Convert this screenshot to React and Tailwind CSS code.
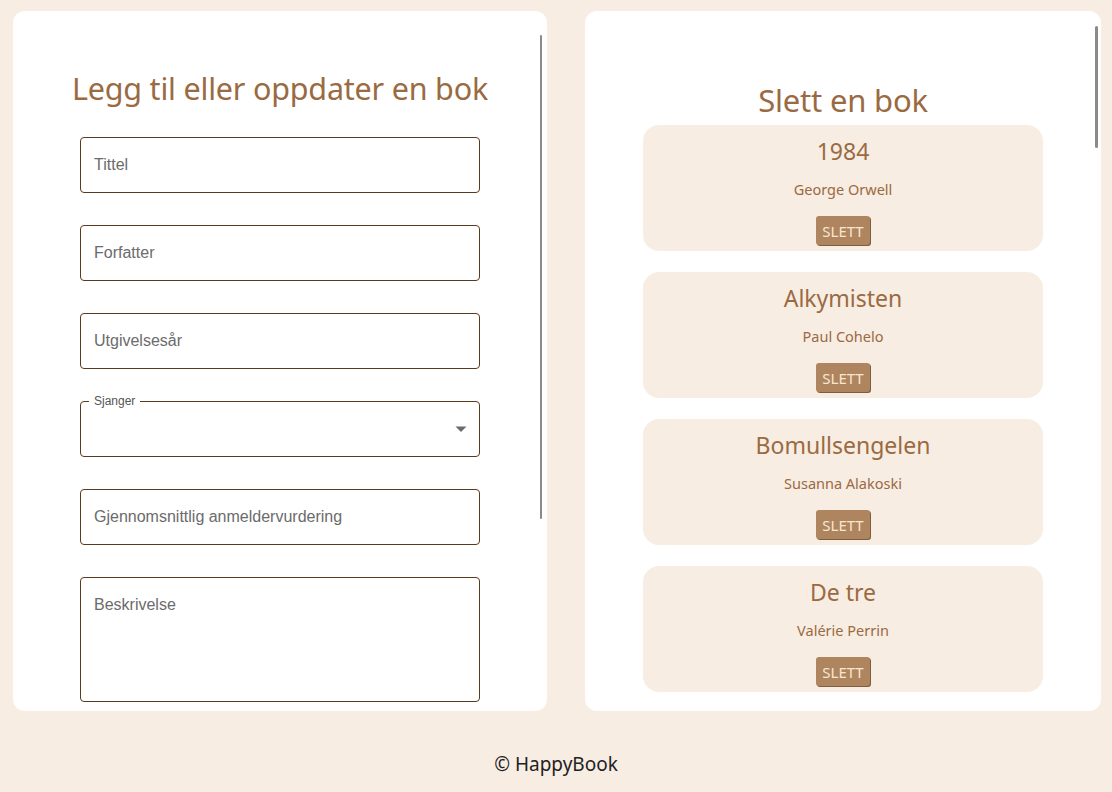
import React from "react";

const books = [
  { title: "1984", author: "George Orwell" },
  { title: "Alkymisten", author: "Paul Cohelo" },
  { title: "Bomullsengelen", author: "Susanna Alakoski" },
  { title: "De tre", author: "Valérie Perrin" },
];

function Field({ label, tall }) {
  return (
    <div
      className={`w-[400px] rounded-[4px] border border-[#5a3a1c] bg-white px-[13px] ${
        tall ? "h-[125px] pt-[14px]" : "h-[56px] flex items-center"
      }`}
    >
      <span className="text-[16px] text-[#6b6b6b] [font-family:'Liberation_Sans',Arial,sans-serif]">
        {label}
      </span>
    </div>
  );
}

export default function App() {
  return (
    <div className="min-h-[792px] w-[1112px] bg-[#f8ede2] [font-family:'Noto_Sans',sans-serif]">
      <div className="flex gap-[38px] pl-[13px] pt-[11px]">
        {/* Left panel */}
        <div className="relative h-[700px] w-[534px] overflow-hidden rounded-[12px] bg-white">
          <div className="absolute left-[527px] top-[24px] h-[484px] w-[2px] rounded bg-[#8a8a8a]" />
          <div className="flex flex-col items-center pt-[56px]">
            <h1 className="text-[30.5px] leading-[42px] text-[#9a6a42] tracking-[-0.2px]">
              Legg til eller oppdater en bok
            </h1>
            <div className="mt-[28px] flex flex-col gap-[32px]">
              <Field label="Tittel" />
              <Field label="Forfatter" />
              <Field label="Utgivelsesår" />
              <div className="relative flex h-[56px] w-[400px] items-center rounded-[4px] border border-[#5a3a1c] bg-white">
                <span className="absolute left-[8px] top-[-9px] bg-white px-[5px] text-[12px] leading-[16px] text-[#555] [font-family:'Liberation_Sans',Arial,sans-serif]">
                  Sjanger
                </span>
                <svg
                  className="absolute right-[12px] top-[23px]"
                  width="12"
                  height="8"
                  viewBox="0 0 12 8"
                >
                  <path d="M0.5 1.5 L11.5 1.5 L6 7 Z" fill="#6b6b6b" />
                </svg>
              </div>
              <Field label="Gjennomsnittlig anmeldervurdering" />
              <Field label="Beskrivelse" tall />
            </div>
          </div>
        </div>

        {/* Right panel */}
        <div className="relative h-[700px] w-[516px] overflow-hidden rounded-[12px] bg-white">
          <div className="absolute left-[510px] top-[15px] h-[122px] w-[3px] rounded bg-[#8a8a8a]" />
          <div className="flex flex-col items-center pt-[68px]">
            <h2 className="text-[31px] leading-[42px] text-[#9a6a42] tracking-[-0.2px]">
              Slett en bok
            </h2>
            <div className="mt-[4px] flex flex-col gap-[21px]">
              {books.map((b) => (
                <div
                  key={b.title}
                  className="flex h-[126px] w-[400px] flex-col items-center rounded-[16px] bg-[#f8ede2] pt-[10px]"
                >
                  <div className="text-[23px] leading-[32px] text-[#9a6a42]">{b.title}</div>
                  <div className="mt-[12px] text-[14.5px] leading-[20px] text-[#9a6a42]">
                    {b.author}
                  </div>
                  <button className="mt-[17px] h-[29px] rounded-[3px] bg-[#ae855f] px-[6px] text-[15px] leading-[20px] text-[#f9e6d0] shadow-[1px_1px_0_#7f5d3f]">
                    SLETT
                  </button>
                </div>
              ))}
            </div>
          </div>
        </div>
      </div>

      <footer className="flex justify-center pt-[40px]">
        <span className="text-[19px] leading-[26px] text-[#222]">© HappyBook</span>
      </footer>
    </div>
  );
}
